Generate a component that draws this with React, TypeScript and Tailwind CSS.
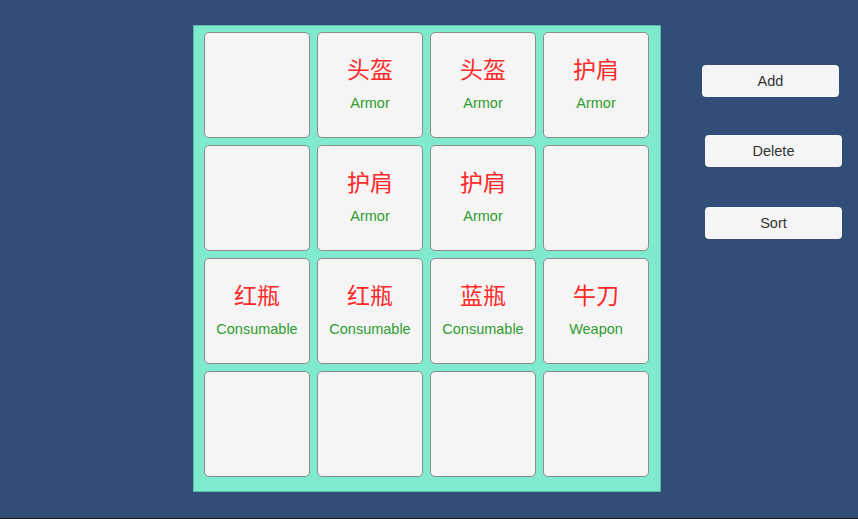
const items: ({ name: string; kind: string } | null)[] = [
  null,
  { name: "头盔", kind: "Armor" },
  { name: "头盔", kind: "Armor" },
  { name: "护肩", kind: "Armor" },
  null,
  { name: "护肩", kind: "Armor" },
  { name: "护肩", kind: "Armor" },
  null,
  { name: "红瓶", kind: "Consumable" },
  { name: "红瓶", kind: "Consumable" },
  { name: "蓝瓶", kind: "Consumable" },
  { name: "牛刀", kind: "Weapon" },
  null,
  null,
  null,
  null,
];

export default function App() {
  return (
    <main className="w-[858px] h-[519px] bg-[#304e78] border-b border-[#1c1c1c] flex items-start pl-[193px] pt-[25px] font-['Liberation_Sans','Noto_Sans_CJK_SC',sans-serif]">
      {/* Inventory panel */}
      <div className="w-[468px] h-[467px] bg-[#7feace] border border-[#5fb8a8] pl-[10px] pt-[6px]">
        <div className="grid grid-cols-[repeat(4,106px)] auto-rows-[106px] gap-[7px]">
          {items.map((item, i) => (
            <div
              key={i}
              className="bg-[#f5f5f5] border border-[#8c8c8c] rounded-[5px] flex flex-col items-center pt-[22px]"
            >
              {item && (
                <>
                  <span className="text-[23px] leading-[26px] text-[#ff2a2a] font-['Noto_Sans_CJK_SC',sans-serif]">
                    {item.name}
                  </span>
                  <span className="text-[14.5px] leading-[17px] text-[#2f9c2f] mt-[14px]">
                    {item.kind}
                  </span>
                </>
              )}
            </div>
          ))}
        </div>
      </div>

      {/* Action buttons */}
      <div className="flex flex-col pt-[40px]">
        <button className="ml-[41px] w-[137px] h-[32px] pt-[2px] bg-[#f5f5f5] rounded-[4px] text-[14.5px] text-[#333]">
          Add
        </button>
        <button className="ml-[44px] mt-[38px] w-[137px] h-[32px] pt-[2px] bg-[#f5f5f5] rounded-[4px] text-[14.5px] text-[#333]">
          Delete
        </button>
        <button className="ml-[44px] mt-[40px] w-[137px] h-[32px] pt-[2px] bg-[#f5f5f5] rounded-[4px] text-[14.5px] text-[#333]">
          Sort
        </button>
      </div>
    </main>
  );
}
